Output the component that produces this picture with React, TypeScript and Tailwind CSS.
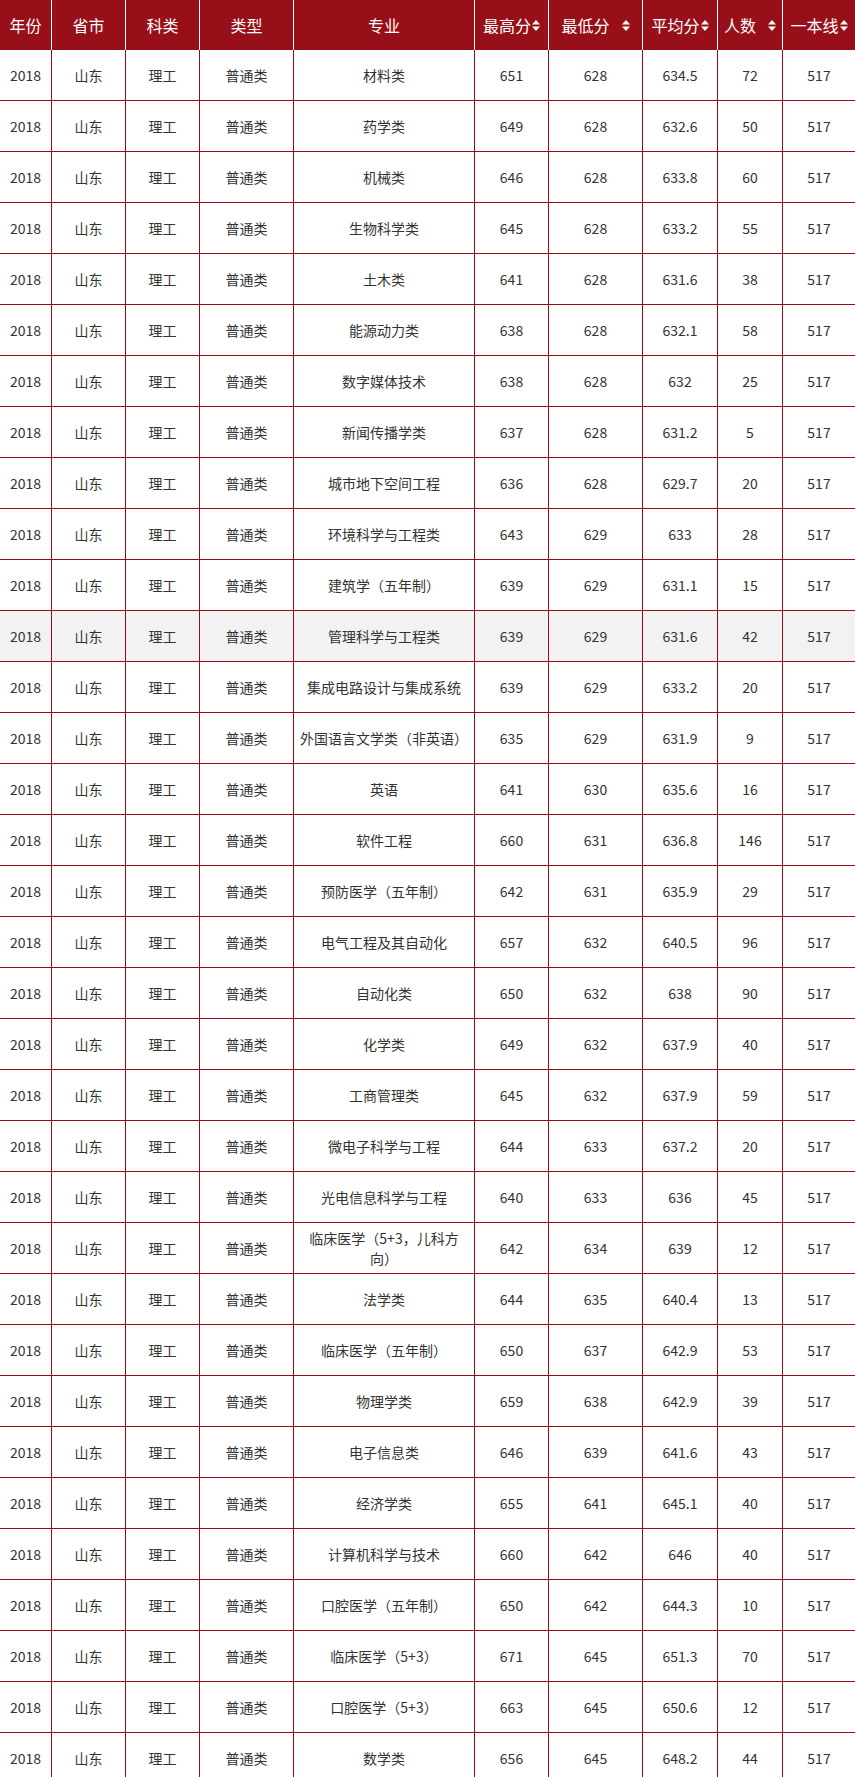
import React from 'react'

const rows: [string, number, number, string, number][] = [
  ['材料类', 651, 628, '634.5', 72],
  ['药学类', 649, 628, '632.6', 50],
  ['机械类', 646, 628, '633.8', 60],
  ['生物科学类', 645, 628, '633.2', 55],
  ['土木类', 641, 628, '631.6', 38],
  ['能源动力类', 638, 628, '632.1', 58],
  ['数字媒体技术', 638, 628, '632', 25],
  ['新闻传播学类', 637, 628, '631.2', 5],
  ['城市地下空间工程', 636, 628, '629.7', 20],
  ['环境科学与工程类', 643, 629, '633', 28],
  ['建筑学（五年制）', 639, 629, '631.1', 15],
  ['管理科学与工程类', 639, 629, '631.6', 42],
  ['集成电路设计与集成系统', 639, 629, '633.2', 20],
  ['外国语言文学类（非英语）', 635, 629, '631.9', 9],
  ['英语', 641, 630, '635.6', 16],
  ['软件工程', 660, 631, '636.8', 146],
  ['预防医学（五年制）', 642, 631, '635.9', 29],
  ['电气工程及其自动化', 657, 632, '640.5', 96],
  ['自动化类', 650, 632, '638', 90],
  ['化学类', 649, 632, '637.9', 40],
  ['工商管理类', 645, 632, '637.9', 59],
  ['微电子科学与工程', 644, 633, '637.2', 20],
  ['光电信息科学与工程', 640, 633, '636', 45],
  ['临床医学（5+3，儿科方向）', 642, 634, '639', 12],
  ['法学类', 644, 635, '640.4', 13],
  ['临床医学（五年制）', 650, 637, '642.9', 53],
  ['物理学类', 659, 638, '642.9', 39],
  ['电子信息类', 646, 639, '641.6', 43],
  ['经济学类', 655, 641, '645.1', 40],
  ['计算机科学与技术', 660, 642, '646', 40],
  ['口腔医学（五年制）', 650, 642, '644.3', 10],
  ['临床医学（5+3）', 671, 645, '651.3', 70],
  ['口腔医学（5+3）', 663, 645, '650.6', 12],
  ['数学类', 656, 645, '648.2', 44],
]

const cols = 'grid grid-cols-[52px_74px_74px_94px_181px_74px_94px_75px_65px_72px]'

function SortIcon() {
  return (
    <svg width="8" height="11" viewBox="0 0 8 11" className="inline-block shrink-0" fill="#fff">
      <path d="M4 0 L8 4.5 L0 4.5 Z" />
      <path d="M0 6.5 L8 6.5 L4 11 Z" />
    </svg>
  )
}

function Th({ label, sort, gap, last }: { label: string; sort?: boolean; gap?: boolean; last?: boolean }) {
  return (
    <div
      className={`flex items-center justify-center px-1 ${last ? '' : 'border-r border-white'}`}
    >
      <span>{label}</span>
      {sort && <span className={gap ? 'ml-[12px] flex' : 'ml-[1px] flex'}><SortIcon /></span>}
    </div>
  )
}

function Td({ children, last, wide }: { children: React.ReactNode; last?: boolean; wide?: boolean }) {
  return (
    <div
      className={`flex items-center justify-center text-center leading-[20px] ${wide ? 'px-[6px]' : 'px-1'} ${last ? '' : 'border-r border-[#990c15]'}`}
    >
      {children}
    </div>
  )
}

export default function App() {
  return (
    <div
      className="w-[855px] overflow-hidden bg-white"
      style={{ fontFamily: '"Noto Sans CJK SC", "Microsoft YaHei", sans-serif' }}
    >
      <div className={`${cols} h-[50px] bg-[#970f18] text-white text-[16px]`}>
        <Th label="年份" />
        <Th label="省市" />
        <Th label="科类" />
        <Th label="类型" />
        <Th label="专业" />
        <Th label="最高分" sort />
        <Th label="最低分" sort gap />
        <Th label="平均分" sort />
        <Th label="人数" sort gap />
        <Th label="一本线" sort last />
      </div>
      {rows.map(([major, hi, lo, avg, n], i) => (
        <div
          key={i}
          className={`${cols} h-[51px] border-b border-[#990c15] text-[14px] text-[#333] ${i === 11 ? 'bg-[#f2f2f2]' : ''}`}
        >
          <Td>2018</Td>
          <Td>山东</Td>
          <Td>理工</Td>
          <Td>普通类</Td>
          <Td wide>{major}</Td>
          <Td>{hi}</Td>
          <Td>{lo}</Td>
          <Td>{avg}</Td>
          <Td>{n}</Td>
          <Td last>517</Td>
        </div>
      ))}
    </div>
  )
}
